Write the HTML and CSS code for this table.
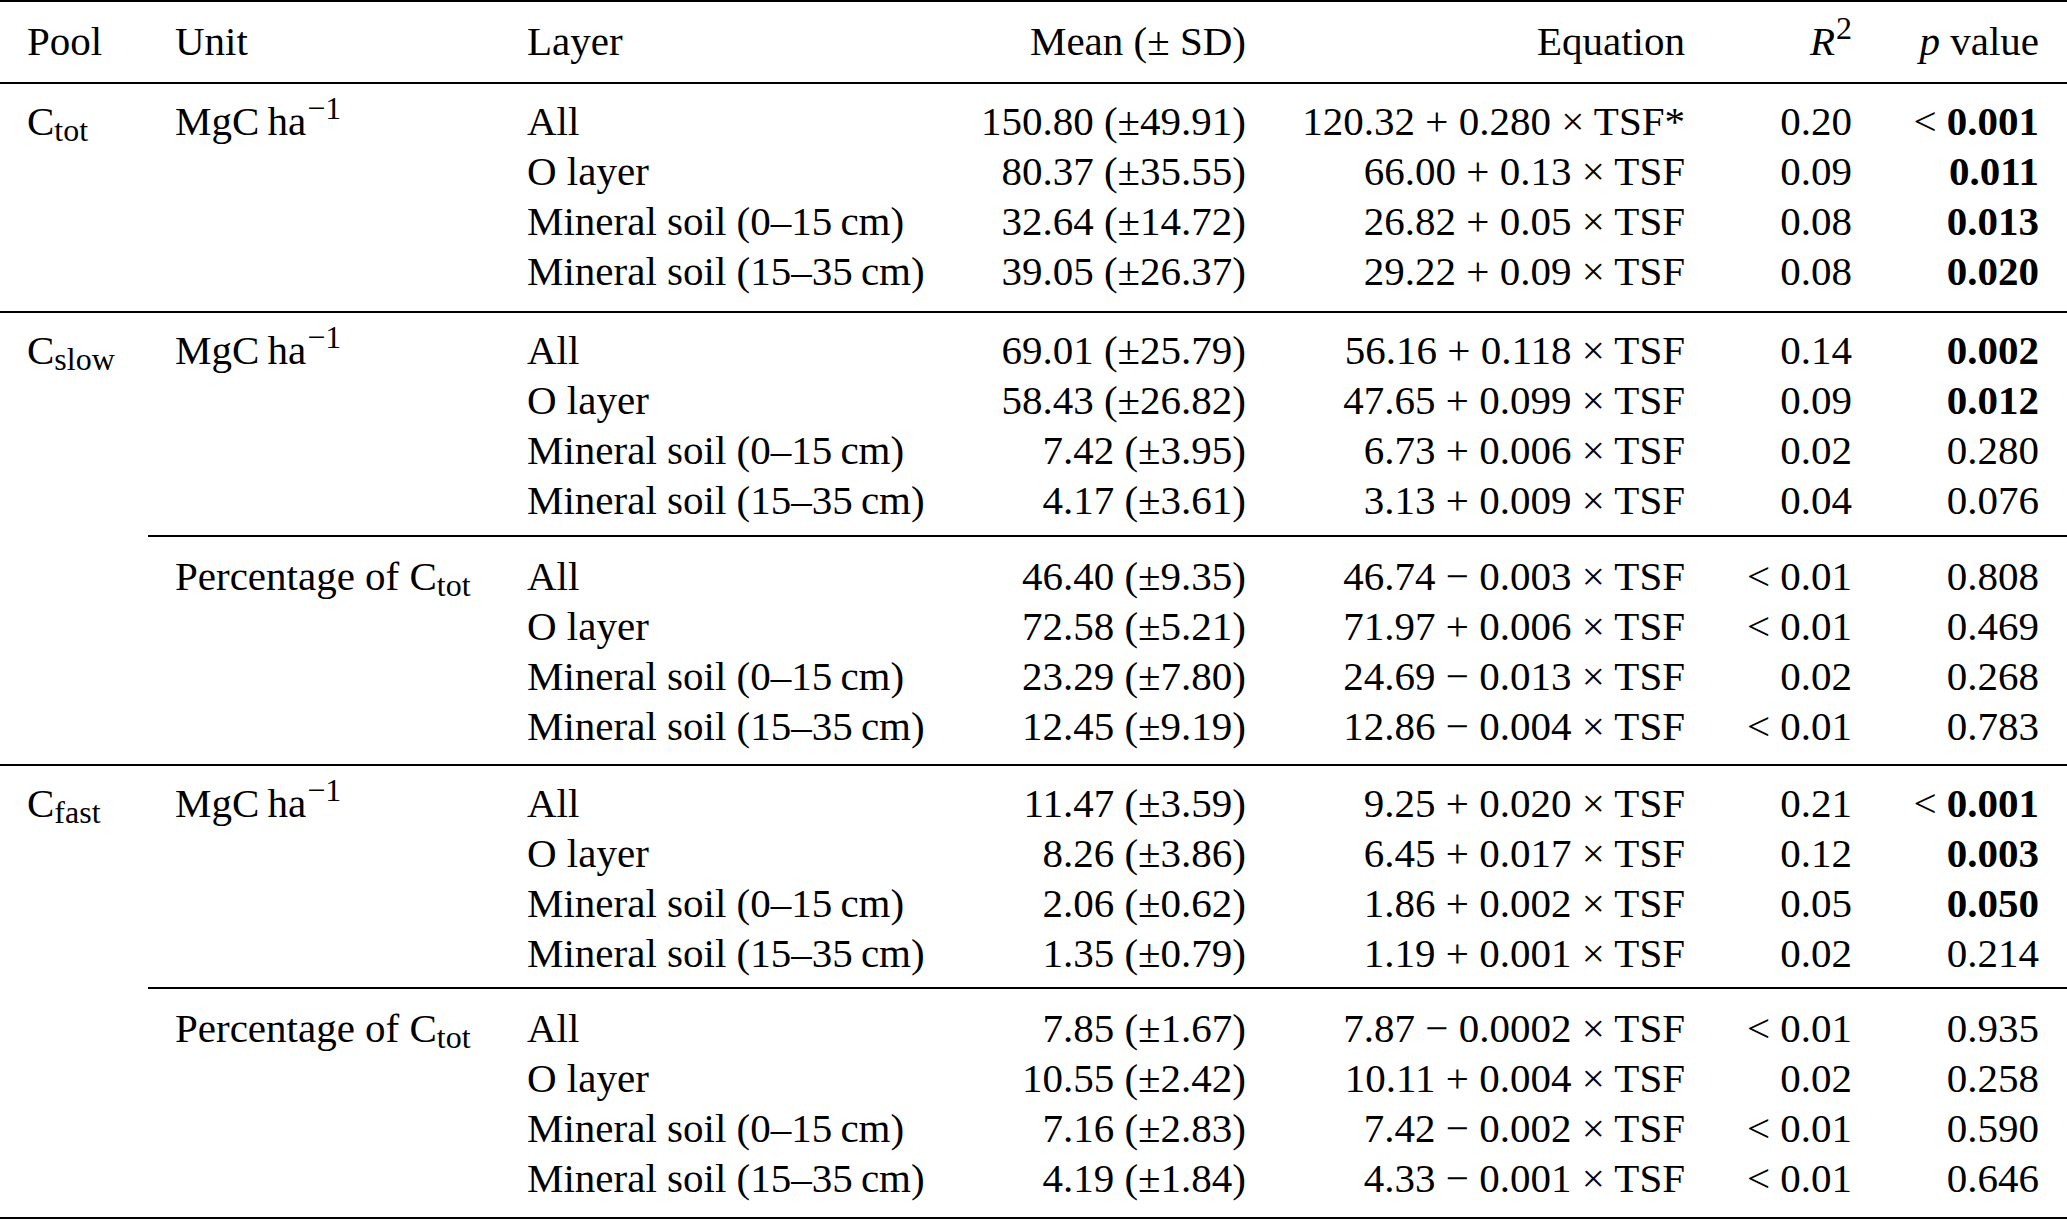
FILE: index.html
```html
<!DOCTYPE html>
<html lang="en">
<head>
<meta charset="utf-8">
<title>Carbon pools</title>
<link rel="stylesheet" href="styles.css">
</head>
<body>
<table class="tbl">
  <colgroup>
    <col class="c-pool"><col class="c-unit"><col class="c-layer"><col class="c-mean"><col class="c-eq"><col class="c-r2"><col class="c-p">
  </colgroup>
  <thead>
    <tr class="hd">
      <th class="l">Pool</th>
      <th class="l">Unit</th>
      <th class="l">Layer</th>
      <th class="r">Mean (± SD)</th>
      <th class="r">Equation</th>
      <th class="r"><i>R</i><span class="sup">2</span></th>
      <th class="r p-col"><i>p</i> value</th>
    </tr>
  </thead>
  <tbody>
    <tr class="gs">
      <td>C<span class="sub">tot</span></td><td>MgC&thinsp;ha<span class="sup">−1</span></td><td>All</td>
      <td class="r">150.80 (±49.91)</td><td class="r">120.32 + 0.280 × TSF*</td><td class="r">0.20</td><td class="r p-col">&lt; <b>0.001</b></td>
    </tr>
    <tr>
      <td></td><td></td><td>O layer</td>
      <td class="r">80.37 (±35.55)</td><td class="r">66.00 + 0.13 × TSF</td><td class="r">0.09</td><td class="r p-col"><b>0.011</b></td>
    </tr>
    <tr>
      <td></td><td></td><td>Mineral soil (0–15&thinsp;cm)</td>
      <td class="r">32.64 (±14.72)</td><td class="r">26.82 + 0.05 × TSF</td><td class="r">0.08</td><td class="r p-col"><b>0.013</b></td>
    </tr>
    <tr class="ge">
      <td></td><td></td><td>Mineral soil (15–35&thinsp;cm)</td>
      <td class="r">39.05 (±26.37)</td><td class="r">29.22 + 0.09 × TSF</td><td class="r">0.08</td><td class="r p-col"><b>0.020</b></td>
    </tr>
  </tbody>
  <tbody>
    <tr class="gs">
      <td>C<span class="sub">slow</span></td><td>MgC&thinsp;ha<span class="sup">−1</span></td><td>All</td>
      <td class="r">69.01 (±25.79)</td><td class="r">56.16 + 0.118 × TSF</td><td class="r">0.14</td><td class="r p-col"><b>0.002</b></td>
    </tr>
    <tr>
      <td></td><td></td><td>O layer</td>
      <td class="r">58.43 (±26.82)</td><td class="r">47.65 + 0.099 × TSF</td><td class="r">0.09</td><td class="r p-col"><b>0.012</b></td>
    </tr>
    <tr>
      <td></td><td></td><td>Mineral soil (0–15&thinsp;cm)</td>
      <td class="r">7.42 (±3.95)</td><td class="r">6.73 + 0.006 × TSF</td><td class="r">0.02</td><td class="r p-col">0.280</td>
    </tr>
    <tr class="se">
      <td></td><td></td><td>Mineral soil (15–35&thinsp;cm)</td>
      <td class="r">4.17 (±3.61)</td><td class="r">3.13 + 0.009 × TSF</td><td class="r">0.04</td><td class="r p-col">0.076</td>
    </tr>
    <tr class="ss">
      <td></td><td>Percentage of C<span class="sub">tot</span></td><td>All</td>
      <td class="r">46.40 (±9.35)</td><td class="r">46.74 − 0.003 × TSF</td><td class="r">&lt; 0.01</td><td class="r p-col">0.808</td>
    </tr>
    <tr>
      <td></td><td></td><td>O layer</td>
      <td class="r">72.58 (±5.21)</td><td class="r">71.97 + 0.006 × TSF</td><td class="r">&lt; 0.01</td><td class="r p-col">0.469</td>
    </tr>
    <tr>
      <td></td><td></td><td>Mineral soil (0–15&thinsp;cm)</td>
      <td class="r">23.29 (±7.80)</td><td class="r">24.69 − 0.013 × TSF</td><td class="r">0.02</td><td class="r p-col">0.268</td>
    </tr>
    <tr class="ge ge2">
      <td></td><td></td><td>Mineral soil (15–35&thinsp;cm)</td>
      <td class="r">12.45 (±9.19)</td><td class="r">12.86 − 0.004 × TSF</td><td class="r">&lt; 0.01</td><td class="r p-col">0.783</td>
    </tr>
  </tbody>
  <tbody>
    <tr class="gs">
      <td>C<span class="sub">fast</span></td><td>MgC&thinsp;ha<span class="sup">−1</span></td><td>All</td>
      <td class="r">11.47 (±3.59)</td><td class="r">9.25 + 0.020 × TSF</td><td class="r">0.21</td><td class="r p-col">&lt; <b>0.001</b></td>
    </tr>
    <tr>
      <td></td><td></td><td>O layer</td>
      <td class="r">8.26 (±3.86)</td><td class="r">6.45 + 0.017 × TSF</td><td class="r">0.12</td><td class="r p-col"><b>0.003</b></td>
    </tr>
    <tr>
      <td></td><td></td><td>Mineral soil (0–15&thinsp;cm)</td>
      <td class="r">2.06 (±0.62)</td><td class="r">1.86 + 0.002 × TSF</td><td class="r">0.05</td><td class="r p-col"><b>0.050</b></td>
    </tr>
    <tr class="se se2">
      <td></td><td></td><td>Mineral soil (15–35&thinsp;cm)</td>
      <td class="r">1.35 (±0.79)</td><td class="r">1.19 + 0.001 × TSF</td><td class="r">0.02</td><td class="r p-col">0.214</td>
    </tr>
    <tr class="ss">
      <td></td><td>Percentage of C<span class="sub">tot</span></td><td>All</td>
      <td class="r">7.85 (±1.67)</td><td class="r">7.87 − 0.0002 × TSF</td><td class="r">&lt; 0.01</td><td class="r p-col">0.935</td>
    </tr>
    <tr>
      <td></td><td></td><td>O layer</td>
      <td class="r">10.55 (±2.42)</td><td class="r">10.11 + 0.004 × TSF</td><td class="r">0.02</td><td class="r p-col">0.258</td>
    </tr>
    <tr>
      <td></td><td></td><td>Mineral soil (0–15&thinsp;cm)</td>
      <td class="r">7.16 (±2.83)</td><td class="r">7.42 − 0.002 × TSF</td><td class="r">&lt; 0.01</td><td class="r p-col">0.590</td>
    </tr>
    <tr class="last">
      <td></td><td></td><td>Mineral soil (15–35&thinsp;cm)</td>
      <td class="r">4.19 (±1.84)</td><td class="r">4.33 − 0.001 × TSF</td><td class="r">&lt; 0.01</td><td class="r p-col">0.646</td>
    </tr>
  </tbody>
</table>
</body>
</html>
```

FILE: styles.css
```css
html, body {
  margin: 0;
  padding: 0;
  background: #ffffff;
}

.tbl {
  width: 2067px;
  table-layout: fixed;
  border-collapse: separate;
  border-spacing: 0;
  font-family: "Liberation Serif", "Times New Roman", serif;
  font-size: 41px;
  color: #000000;
}

.c-pool { width: 148px; }
.c-unit { width: 352px; }
.c-layer { width: 445px; }
.c-mean { width: 328px; }
.c-eq { width: 439px; }
.c-r2 { width: 167px; }
.c-p { width: 188px; }

.tbl th,
.tbl td {
  padding: 0 27px;
  line-height: 50px;
  height: 50px;
  white-space: nowrap;
  vertical-align: top;
  font-weight: normal;
  text-align: left;
}

.tbl .r { text-align: right; }
.tbl .l { text-align: left; }
.tbl .p-col { padding-right: 28px; }

.tbl b { font-weight: bold; }

.sub {
  font-size: 0.78em;
  line-height: 0;
  vertical-align: -0.2em;
}

.sup {
  font-size: 0.78em;
  line-height: 0;
  vertical-align: 16px;
  margin-left: 1px;
}

/* header */
.hd th {
  border-top: 2px solid #000;
  padding-top: 14px;
  padding-bottom: 16px;
}

/* main group start: full rule */
.gs td {
  border-top: 2px solid #000;
  padding-top: 12px;
}

/* main group end */
.ge td { padding-bottom: 15px; }
.ge2 td { padding-bottom: 13px; }

/* sub group end */
.se td { padding-bottom: 10px; }
.se2 td { padding-bottom: 9px; }

/* sub group start: partial rule from Unit column */
.ss td {
  border-top: 2px solid #000;
  padding-top: 14px;
}
.ss td:first-child { border-top-color: transparent; }

.last td {
  border-bottom: 2px solid #000;
  padding-bottom: 14px;
}
```
